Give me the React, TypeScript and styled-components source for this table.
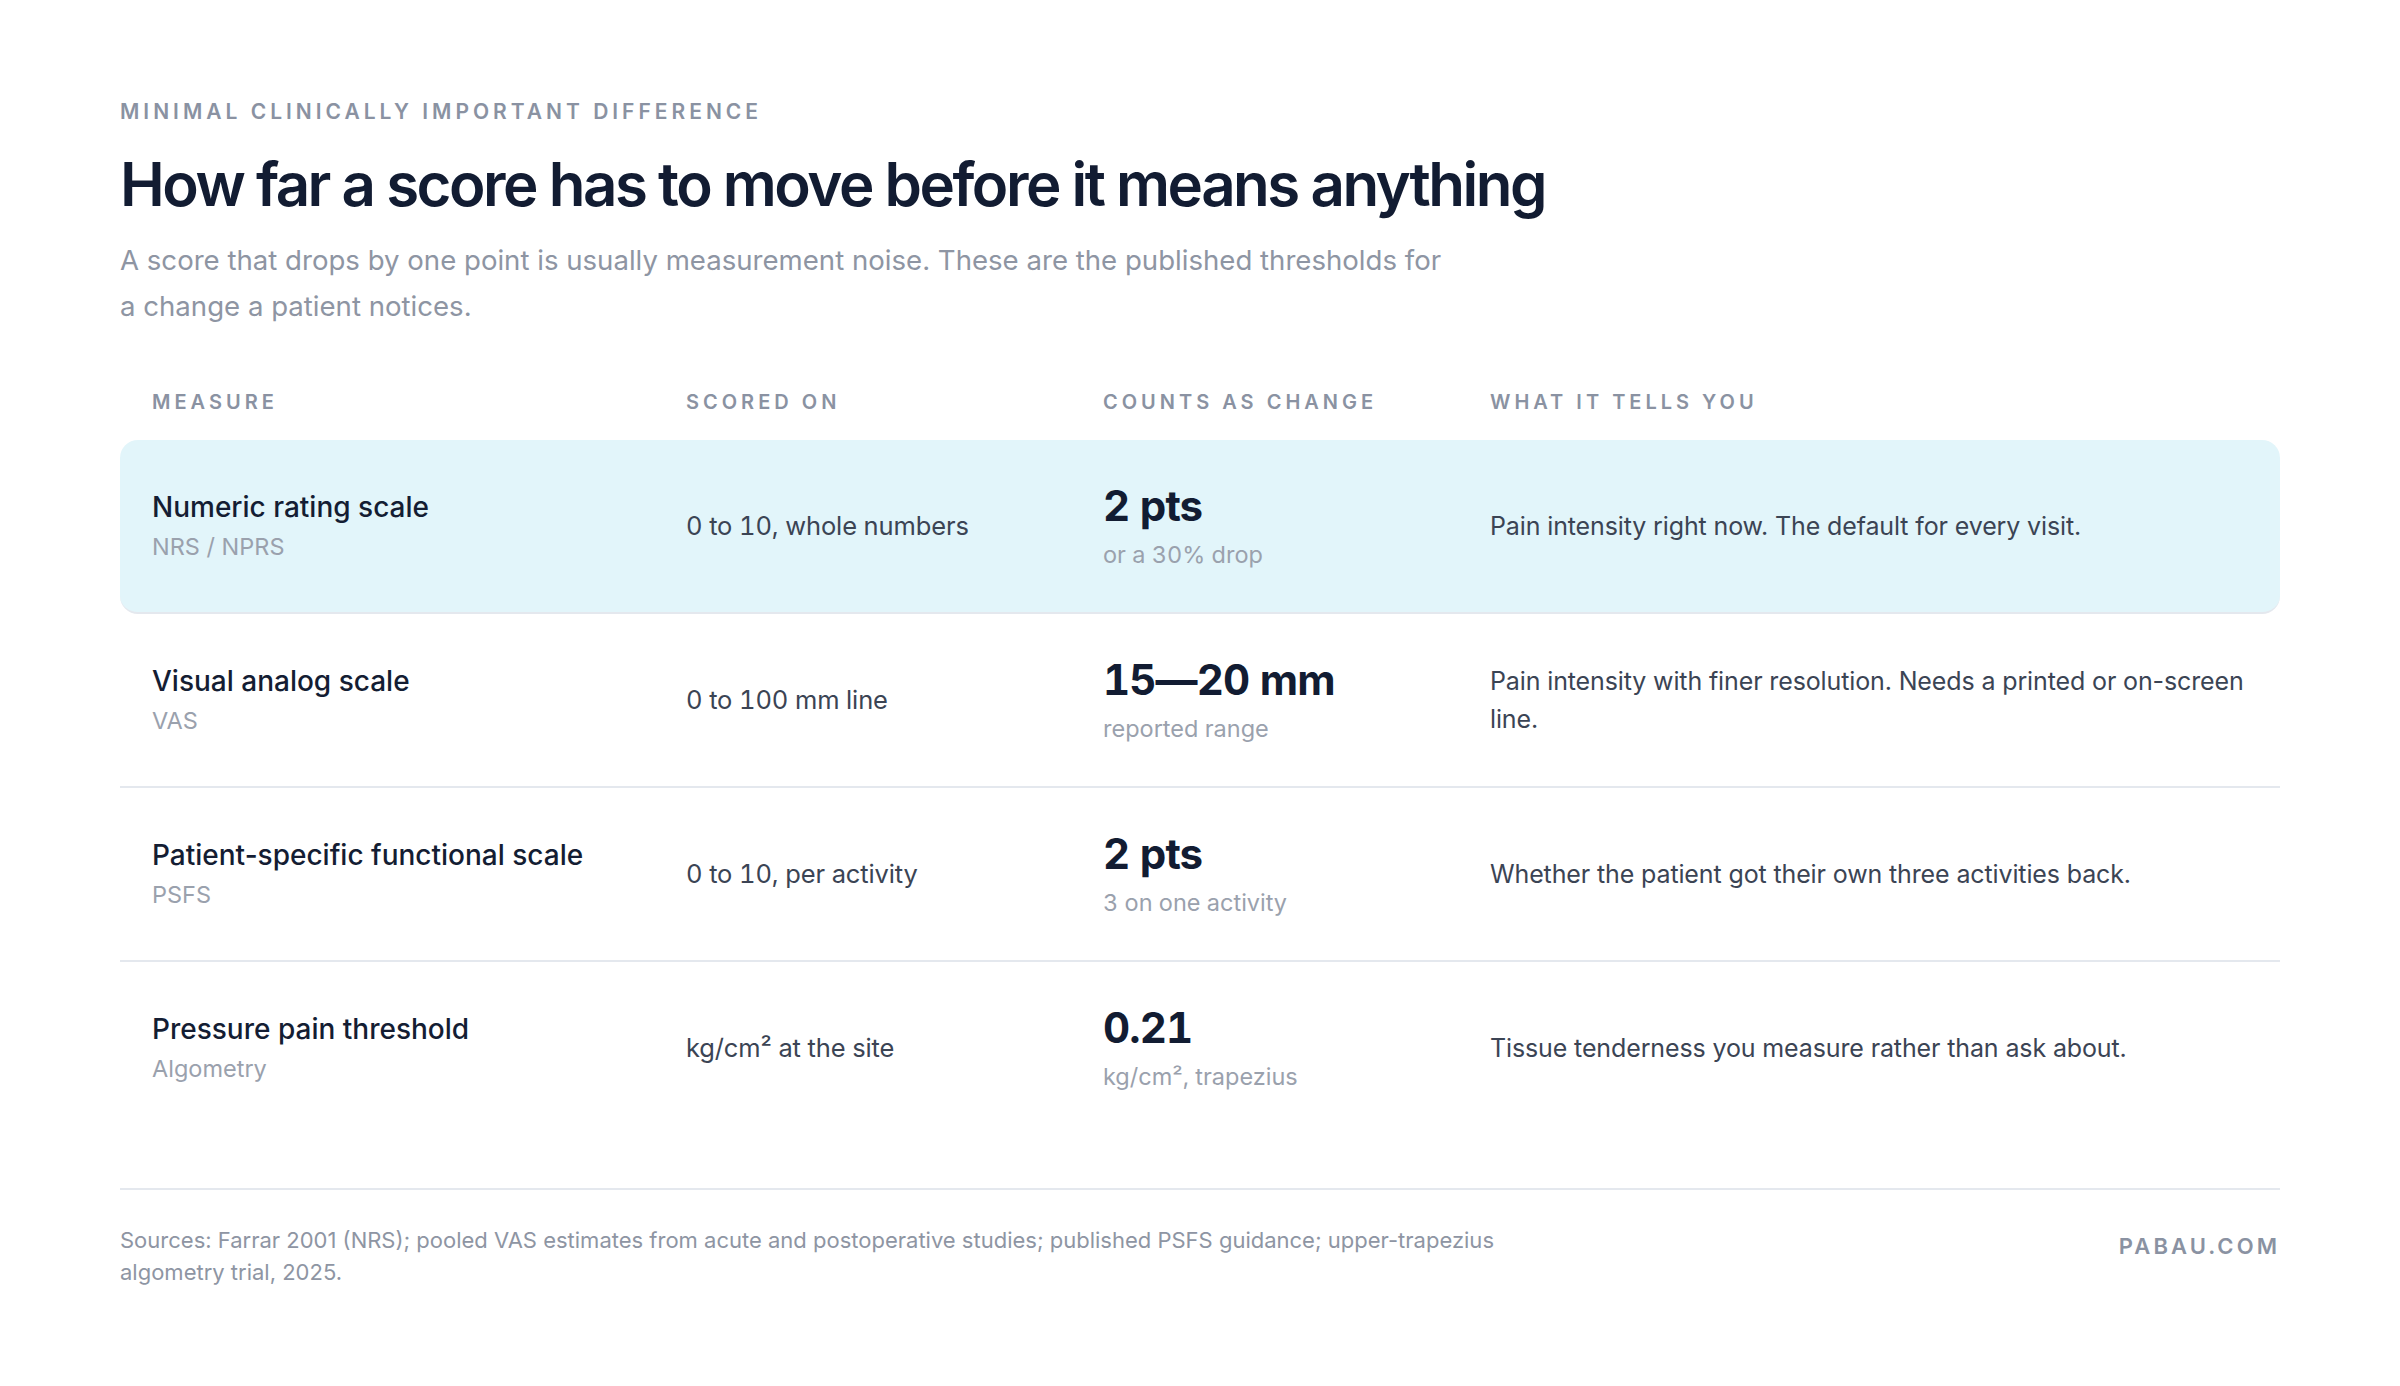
import React from "react";
import styled, { createGlobalStyle } from "styled-components";

const GlobalStyle = createGlobalStyle`
  html, body {
    margin: 0;
    padding: 0;
    background: #ffffff;
  }
  body {
    font-family: Inter, "Noto Sans", "Liberation Sans", sans-serif;
    -webkit-font-smoothing: antialiased;
  }
`;

const Page = styled.main`
  box-sizing: border-box;
  width: 2400px;
  min-height: 1386px;
  padding: 100px 120px 80px;
  display: flex;
  flex-direction: column;
`;

const Eyebrow = styled.div`
  font-size: 21px;
  line-height: 24px;
  font-weight: 600;
  letter-spacing: 0.19em;
  color: #8a92a2;
  text-transform: uppercase;
`;

const Title = styled.h1`
  margin: 26px 0 0;
  font-size: 60px;
  line-height: 68px;
  font-weight: 600;
  letter-spacing: -0.0415em;
  color: #121c32;
`;

const Lede = styled.p`
  margin: 19px 0 0;
  max-width: 1336px;
  font-size: 27.6px;
  line-height: 46px;
  font-weight: 400;
  color: #8e95a3;
`;

const Table = styled.section`
  margin-top: 61px;
  display: flex;
  flex-direction: column;
`;

const Grid = styled.div<{ $highlight?: boolean; $last?: boolean }>`
  display: grid;
  grid-template-columns: 534px 417px 387px 1fr;
  align-items: center;
  padding: 0 32px;
`;

const HeadRow = styled(Grid)`
  padding-bottom: 26px;
`;

const HeadCell = styled.div`
  font-size: 20px;
  line-height: 24px;
  font-weight: 600;
  letter-spacing: 0.2em;
  color: #8a92a2;
  text-transform: uppercase;
`;

const Row = styled(Grid)`
  height: 172px;
  box-sizing: content-box;
  background: ${(p) => (p.$highlight ? "#e2f5fa" : "transparent")};
  border-radius: ${(p) => (p.$highlight ? "18px" : "0")};
  border-bottom: ${(p) => (p.$last ? "none" : "2px solid #e4e8ee")};
`;

const Stack = styled.div<{ $gap: number }>`
  display: flex;
  flex-direction: column;
  gap: ${(p) => p.$gap}px;
`;

const Name = styled.div`
  font-size: 28px;
  line-height: 36px;
  font-weight: 500;
  color: #141d33;
`;

const Sub = styled.div<{ $numeric?: boolean }>`
  font-size: 23.5px;
  line-height: 32px;
  font-weight: 400;
  color: #9aa1ad;
  font-variant-numeric: ${(p) => (p.$numeric ? "tabular-nums" : "normal")};
`;

const Body = styled.div`
  font-size: 25px;
  line-height: 38px;
  font-weight: 400;
  color: #3b4454;
  letter-spacing: -0.005em;
`;

const ScaleText = styled(Body)`
  font-size: 25.5px;
  font-variant-numeric: tabular-nums;
`;

const Figure = styled.div`
  font-size: 42px;
  line-height: 50px;
  font-weight: 700;
  letter-spacing: -0.02em;
  color: #121c32;
  font-variant-numeric: tabular-nums;
`;

const Footer = styled.footer`
  margin-top: 54px;
  border-top: 2px solid #e4e8ee;
  padding-top: 34px;
  display: flex;
  justify-content: space-between;
  align-items: flex-start;
`;

const Sources = styled.p`
  margin: 0;
  max-width: 1420px;
  font-size: 22px;
  line-height: 32px;
  color: #8e95a3;
`;

const Brand = styled.div`
  margin-top: 6px;
  font-size: 22px;
  line-height: 32px;
  font-weight: 600;
  letter-spacing: 0.14em;
  color: #8a92a2;
`;

type Measure = {
  name: string;
  abbr: string;
  scale: string;
  value: string;
  note: string;
  tells: string;
};

const rows: Measure[] = [
  {
    name: "Numeric rating scale",
    abbr: "NRS / NPRS",
    scale: "0 to 10, whole numbers",
    value: "2 pts",
    note: "or a 30% drop",
    tells: "Pain intensity right now. The default for every visit.",
  },
  {
    name: "Visual analog scale",
    abbr: "VAS",
    scale: "0 to 100 mm line",
    value: "15\u201420 mm",
    note: "reported range",
    tells: "Pain intensity with finer resolution. Needs a printed or on-screen line.",
  },
  {
    name: "Patient-specific functional scale",
    abbr: "PSFS",
    scale: "0 to 10, per activity",
    value: "2 pts",
    note: "3 on one activity",
    tells: "Whether the patient got their own three activities back.",
  },
  {
    name: "Pressure pain threshold",
    abbr: "Algometry",
    scale: "kg/cm\u00b2 at the site",
    value: "0.21",
    note: "kg/cm\u00b2, trapezius",
    tells: "Tissue tenderness you measure rather than ask about.",
  },
];

export default function App() {
  return (
    <>
      <GlobalStyle />
      <Page>
        <Eyebrow>Minimal clinically important difference</Eyebrow>
        <Title>How far a score has to move before it means anything</Title>
        <Lede>
          A score that drops by one point is usually measurement noise. These are the published
          thresholds for a change a patient notices.
        </Lede>
        <Table>
          <HeadRow>
            <HeadCell>Measure</HeadCell>
            <HeadCell>Scored on</HeadCell>
            <HeadCell>Counts as change</HeadCell>
            <HeadCell>What it tells you</HeadCell>
          </HeadRow>
          {rows.map((r, i) => (
            <Row key={r.name} $highlight={i === 0} $last={i === rows.length - 1}>
              <Stack $gap={6}>
                <Name>{r.name}</Name>
                <Sub>{r.abbr}</Sub>
              </Stack>
              <ScaleText>{r.scale}</ScaleText>
              <Stack $gap={8}>
                <Figure>{r.value}</Figure>
                <Sub $numeric>{r.note}</Sub>
              </Stack>
              <Body>{r.tells}</Body>
            </Row>
          ))}
        </Table>
        <Footer>
          <Sources>
            Sources: Farrar 2001 (NRS); pooled VAS estimates from acute and postoperative studies;
            published PSFS guidance; upper-trapezius algometry trial, 2025.
          </Sources>
          <Brand>PABAU.COM</Brand>
        </Footer>
      </Page>
    </>
  );
}
